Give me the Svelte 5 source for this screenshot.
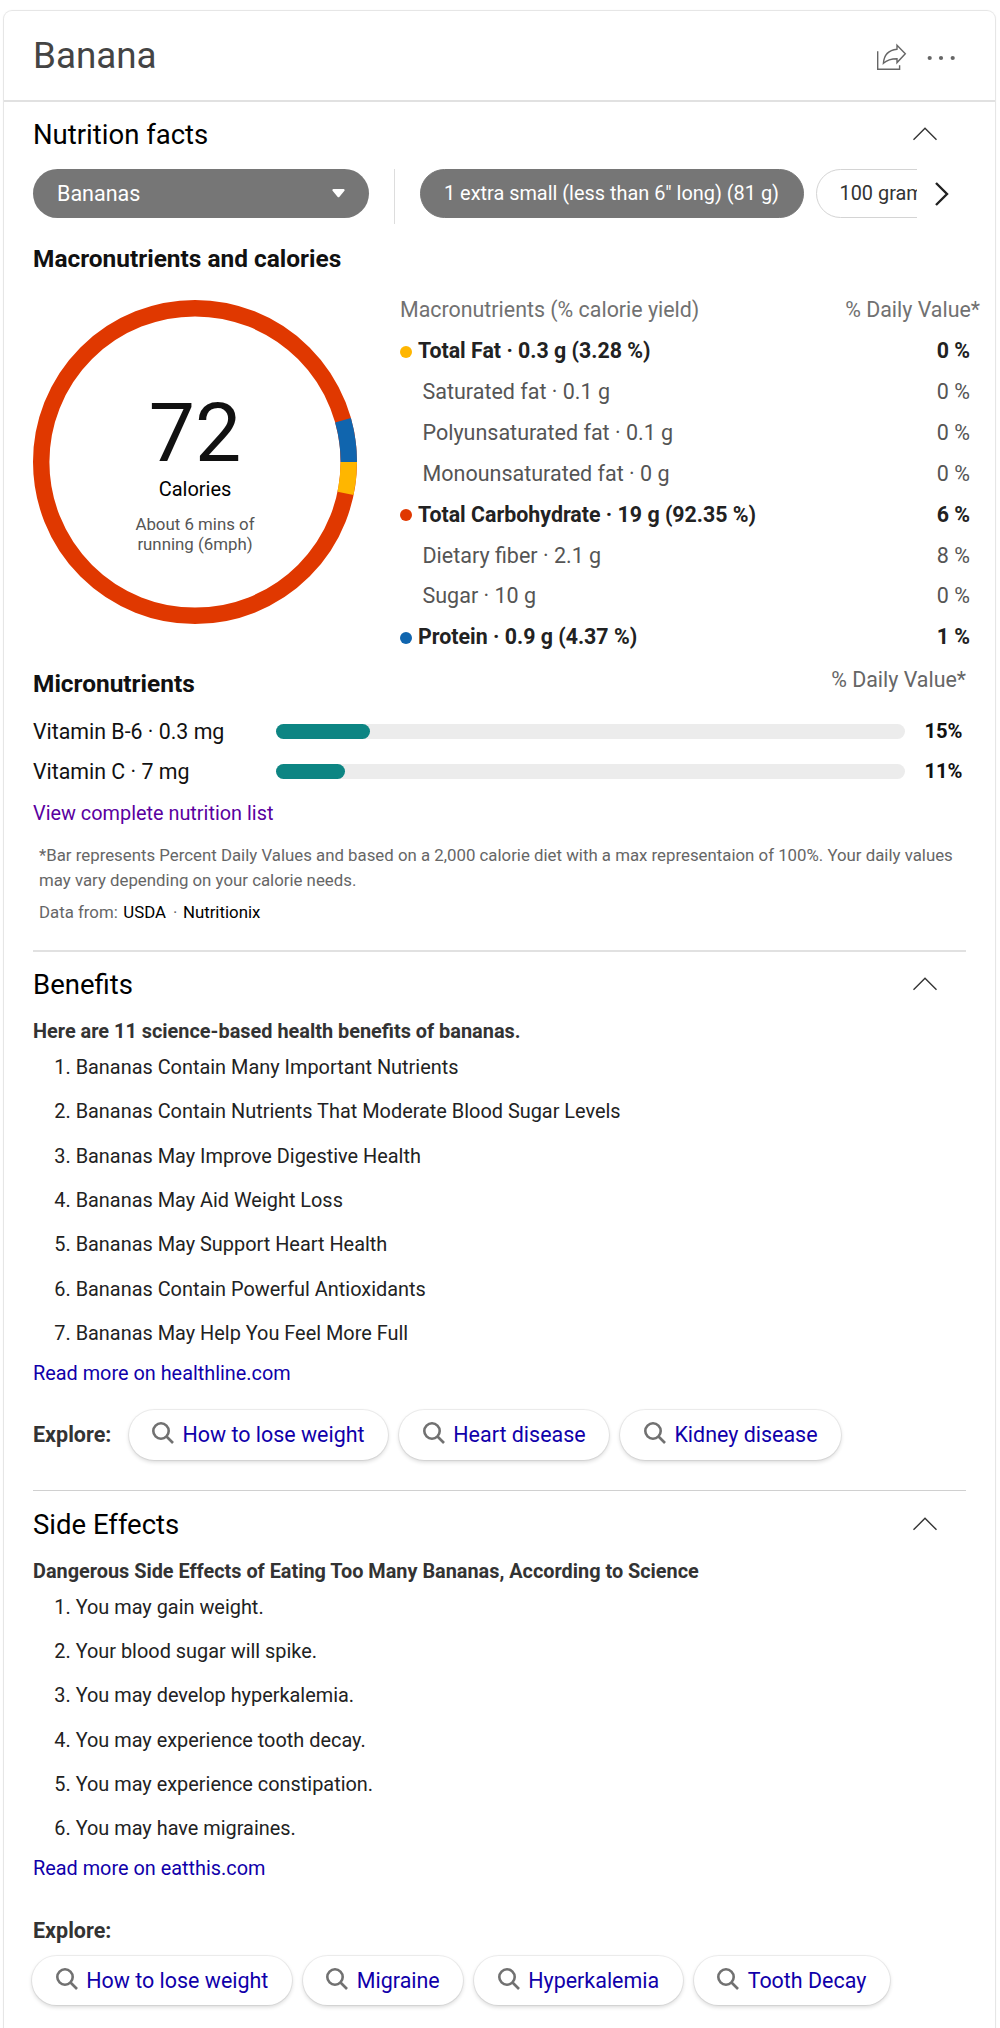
<script>
  const macros = [
    { label: 'Total Fat · 0.3 g (3.28 %)', value: '0 %', tone: 'fat' },
    { label: 'Saturated fat · 0.1 g', value: '0 %' },
    { label: 'Polyunsaturated fat · 0.1 g', value: '0 %' },
    { label: 'Monounsaturated fat · 0 g', value: '0 %' },
    { label: 'Total Carbohydrate · 19 g (92.35 %)', value: '6 %', tone: 'carb' },
    { label: 'Dietary fiber · 2.1 g', value: '8 %' },
    { label: 'Sugar · 10 g', value: '0 %' },
    { label: 'Protein · 0.9 g (4.37 %)', value: '1 %', tone: 'protein' }
  ];
  const micros = [
    { label: 'Vitamin B-6 · 0.3 mg', percent: 15 },
    { label: 'Vitamin C · 7 mg', percent: 11 }
  ];
  const sections = [
    {
      title: 'Benefits',
      lead: 'Here are 11 science-based health benefits of bananas.',
      items: [
        'Bananas Contain Many Important Nutrients',
        'Bananas Contain Nutrients That Moderate Blood Sugar Levels',
        'Bananas May Improve Digestive Health',
        'Bananas May Aid Weight Loss',
        'Bananas May Support Heart Health',
        'Bananas Contain Powerful Antioxidants',
        'Bananas May Help You Feel More Full'
      ],
      more: 'Read more on healthline.com',
      explore: ['How to lose weight', 'Heart disease', 'Kidney disease'],
      stacked: false
    },
    {
      title: 'Side Effects',
      lead: 'Dangerous Side Effects of Eating Too Many Bananas, According to Science',
      items: [
        'You may gain weight.',
        'Your blood sugar will spike.',
        'You may develop hyperkalemia.',
        'You may experience tooth decay.',
        'You may experience constipation.',
        'You may have migraines.'
      ],
      more: 'Read more on eatthis.com',
      explore: ['How to lose weight', 'Migraine', 'Hyperkalemia', 'Tooth Decay'],
      stacked: true
    }
  ];

  // Donut geometry: slices are drawn clockwise from three o'clock.
  const radius = 153.8;
  const circumference = 2 * Math.PI * radius;
  const arc = (share) => `${(share / 100) * circumference} ${circumference}`;
</script>

{#snippet heading(title)}
  <div class="heading">
    <h2>{title}</h2>
    <svg class="collapse" width="26" height="16" viewBox="0 0 26 16">
      <path d="M1.5 13.8 13 2.3 24.5 13.8" />
    </svg>
  </div>
{/snippet}

<main class="card">
  <header>
    <h1>Banana</h1>
    <div class="actions">
      <svg width="32" height="28" viewBox="0 0 32 28">
        <path d="M1.7 8.2V26.3H23.6V22.3" />
        <path d="M21 2.2V6.2C13 7 8 11.5 7.4 20.3C11.5 16.5 15.5 15.7 21 15.7V19.6L29.3 10.7Z" />
      </svg>
      <svg width="28" height="6" viewBox="0 0 28 6" class="dots">
        <circle cx="2.7" cy="3" r="2.1" /><circle cx="14" cy="3" r="2.1" /><circle cx="25.7" cy="3" r="2.1" />
      </svg>
    </div>
  </header>

  <section>
    {@render heading('Nutrition facts')}
    <div class="filters">
      <button class="select">
        Bananas
        <svg width="13" height="9" viewBox="0 0 13 9"><path d="M1.3 0H11.7Q13.4 .6 12.2 2L7.5 7.8Q6.5 8.9 5.5 7.8L.8 2Q-.4 .6 1.3 0Z" /></svg>
      </button>
      <div class="servings">
        <button class="serving active">1 extra small (less than 6" long) (81 g)</button>
        <button class="serving">100 grams</button>
      </div>
      <svg class="next" width="16" height="26" viewBox="0 0 16 26"><path d="M2 2 13 13 2 24" /></svg>
    </div>

    <h3>Macronutrients and calories</h3>
    <div class="macros">
      <div class="donut">
        <svg width="324" height="324" viewBox="-162 -162 324 324">
          <circle r={radius} class="carb" />
          <circle r={radius} class="fat" stroke-dasharray={arc(3.28)} />
          <circle r={radius} class="protein" stroke-dasharray={arc(4.37)} transform="rotate(-15.73)" />
        </svg>
        <div class="center">
          <div class="total">72</div>
          <div class="unit">Calories</div>
          <div class="activity">About 6 mins of<br />running (6mph)</div>
        </div>
      </div>
      <div class="table">
        <div class="row head"><span>Macronutrients (% calorie yield)</span><span>% Daily Value*</span></div>
        {#each macros as m}
          <div class="row" class:major={m.tone}>
            {#if m.tone}<i class="dot {m.tone}"></i>{/if}
            <span>{m.label}</span><span class="value">{m.value}</span>
          </div>
        {/each}
      </div>
    </div>

    <div class="micro-head"><h3>Micronutrients</h3><span>% Daily Value*</span></div>
    <div class="micros">
      {#each micros as m}
        <div class="micro">
          <span>{m.label}</span>
          <div class="track"><div class="fill" style="width: {m.percent}%"></div></div>
          <b>{m.percent}%</b>
        </div>
      {/each}
    </div>
    <a class="more visited" href="#list">View complete nutrition list</a>
    <div class="notes">
      <p>*Bar represents Percent Daily Values and based on a 2,000 calorie diet with a max representaion of 100%. Your daily values<br />may vary depending on your calorie needs.</p>
      <p class="source"><span>Data from:</span><a href="#usda">USDA</a><span class="sep">·</span><a href="#nutritionix">Nutritionix</a></p>
    </div>
  </section>

  {#each sections as s}
    <section class="ruled" class:thin={s.stacked}>
      {@render heading(s.title)}
      <p class="lead">{s.lead}</p>
      <ol>
        {#each s.items as item, i}<li>{i + 1}. {item}</li>{/each}
      </ol>
      <a class="more" href="#more">{s.more}</a>
      <div class="explore" class:stacked={s.stacked}>
        <strong>Explore:</strong>
        <div class="chips">
          {#each s.explore as term}
            <a class="chip" href="#search">
              <svg width="22" height="22" viewBox="0 0 22 22"><circle cx="9" cy="9" r="7.7" /><path d="M14.5 14.5 21 21" /></svg>
              {term}
            </a>
          {/each}
        </div>
      </div>
    </section>
  {/each}
</main>

<style>
  :global(body) {
    background: #fff;
    overflow: hidden;
    height: 2028px;
  }
  h1, h2, h3, p, ol { margin: 0; padding: 0; font-weight: 400; }
  a { text-decoration: none; }
  .card {
    box-sizing: border-box;
    height: 2080px;
    margin: 11px 5px 0 4px;
    border-radius: 8px;
    background: #fff;
    box-shadow: 0 0 0 1px rgba(0, 0, 0, 0.07), 0 0 2px 1px rgba(0, 0, 0, 0.04);
    font-family: Roboto, "Liberation Sans", sans-serif;
    color: #111;
  }
  header {
    display: flex;
    align-items: center;
    justify-content: space-between;
    height: 89px;
    padding: 0 40px 0 29px;
    border-bottom: 2px solid #e1e1e1;
  }
  h1 { font-size: 36.8px; color: #444; line-height: 45px; }
  .actions { display: flex; align-items: center; gap: 19px; margin-top: 3px; }
  .actions svg { fill: none; stroke: #666; stroke-width: 1.4; }
  .actions .dots { margin-top: 2px; fill: #666; stroke: none; }
  section { padding: 16px 29px 0; }
  .heading { display: flex; align-items: center; justify-content: space-between; height: 34px; }
  h2 { font-size: 27.5px; line-height: 34px; color: #000; }
  .collapse { margin-right: 28.5px; margin-top: -2px; fill: none; stroke: #333; stroke-width: 1.4; }
  .filters { display: flex; height: 55px; margin-top: 17px; }
  button {
    box-sizing: border-box;
    flex: none;
    height: 49px;
    border: 0;
    border-radius: 25px;
    background: #767676;
    color: #fff;
    font: 21.6px Roboto, sans-serif;
    white-space: nowrap;
  }
  .select {
    display: flex;
    align-items: center;
    justify-content: space-between;
    width: 336px;
    padding: 0 24px;
    font-size: 21.5px;
  }
  .select svg { fill: #fff; }
  .servings {
    display: flex;
    gap: 12px;
    width: 496.7px;
    margin-left: 25px;
    padding-left: 25px;
    border-left: 1px solid #ddd;
    overflow: hidden;
  }
  .serving {
    padding: 0 0 1px 23px;
    width: 383.5px;
    border: 1px solid #767676;
    font-size: 19.9px;
    text-align: left;
  }
  .serving:not(.active) { background: #fff; color: #333; border: 1.5px solid #d4d4d4; width: 200px; }
  .next { margin: 12px 0 0 17px; fill: none; stroke: #222; stroke-width: 2.4; }
  h3 { font-size: 24.45px; font-weight: 700; line-height: 30px; color: #111; }
  .filters + h3 { margin-top: 20px; }
  .macros { display: flex; justify-content: space-between; height: 368px; margin: 15px -14px 0 0; }
  .donut { display: grid; margin-top: 11px; width: 324px; height: 324px; }
  .donut > * { grid-area: 1 / 1; }
  .donut circle { fill: none; stroke-width: 16.4; }
  circle.carb { stroke: #e03800; }
  circle.fat { stroke: #ffb600; }
  circle.protein { stroke: #1065ae; }
  .center { padding-top: 84px; text-align: center; }
  .total { font-size: 82.3px; line-height: 98px; color: #111; }
  .unit { font-size: 20px; line-height: 26px; margin-top: -6px; color: #000; }
  .activity { font-size: 16.85px; line-height: 20px; margin-top: 11.5px; color: #555; }
  .table { width: 580px; padding-top: 1.2px; }
  .row {
    display: flex;
    align-items: center;
    height: 40.9px;
    padding: 0 10px 0 22.5px;
    font-size: 21.5px;
    line-height: 40.9px;
    color: #555;
  }
  .row.head { padding: 0 0 0 0; font-size: 21.4px; color: #717171; }
  .row span:last-child { margin-left: auto; }
  .row.major { padding-left: 0; font-size: 21.35px; font-weight: 700; color: #222; }
  .dot { width: 12px; height: 12px; margin-right: 6px; border-radius: 50%; }
  .dot.fat { background: #ffb600; }
  .dot.carb { background: #e03800; }
  .dot.protein { background: #1065ae; }
  .micro-head { display: flex; justify-content: space-between; height: 33px; margin-top: 8px; }
  .micro-head h3 { padding-top: 4px; }
  .micro-head span { font-size: 21.4px; line-height: 30px; color: #666; }
  .micros { margin-top: 13.5px; }
  .micro { display: grid; grid-template-columns: 243px 628.5px 1fr; align-items: center; height: 40px; font-size: 21.35px; }
  .track { height: 15px; border-radius: 8px; background: #ececec; }
  .fill { height: 15px; border-radius: 8px; background: #0d8583; }
  .micro b { padding: 0 3.5px 2px 0; text-align: right; font-size: 20.2px; }
  .more { display: block; font-size: 19.88px; line-height: 26px; color: #1000aa; }
  .visited { margin-top: 9px; color: #5a00a0; }
  .notes { padding: 16.5px 0 25px 6px; font-size: 16.82px; line-height: 25px; color: #666; }
  .notes p { white-space: nowrap; }
  .source { display: flex; margin-top: 7px; }
  .source a { color: #000; margin-left: 5.5px; }
  .source .sep { margin: 0 0 0 7px; }
  .ruled { padding-top: 0; }
  .ruled .heading { padding-top: 16px; border-top: 2px solid #e1e1e1; }
  .ruled.thin .heading { border-top: 1.5px solid #d0d0d0; }
  .ruled.thin .heading { padding-top: 16.8px; }
  .lead { margin-top: 17px; font-size: 19.9px; font-weight: 700; line-height: 26px; color: #333; }
  .thin .lead { font-size: 19.86px; }
  ol { list-style: none; padding: 0.9px 0 0 21.3px; margin-bottom: 4.4px; }
  li { height: 44.35px; line-height: 44.35px; font-size: 19.9px; color: #222; }
  .explore { display: flex; align-items: center; padding: 23.3px 0 30.3px; }
  .explore strong { width: 95.5px; font-size: 21.5px; line-height: 28px; color: #333; }
  .chips { display: flex; gap: 11.3px; }
  .chip {
    display: flex;
    align-items: center;
    box-sizing: border-box;
    height: 49.6px;
    padding: 0 23.5px;
    border-radius: 25px;
    background: #fff;
    box-shadow: 0 0 0 1px rgba(0, 0, 0, 0.06), 0 2px 4px 0 rgba(0, 0, 0, 0.16);
    font-size: 21.45px;
    color: #1000aa;
    white-space: nowrap;
  }
  .chip svg { margin: -3px 8.5px 0 0; fill: none; stroke: #717171; stroke-width: 2.6; }
  .stacked { flex-direction: column; align-items: flex-start; gap: 10.7px; padding-top: 35px; }
  .stacked .chips { margin-left: -0.7px; gap: 11px; }
</style>
